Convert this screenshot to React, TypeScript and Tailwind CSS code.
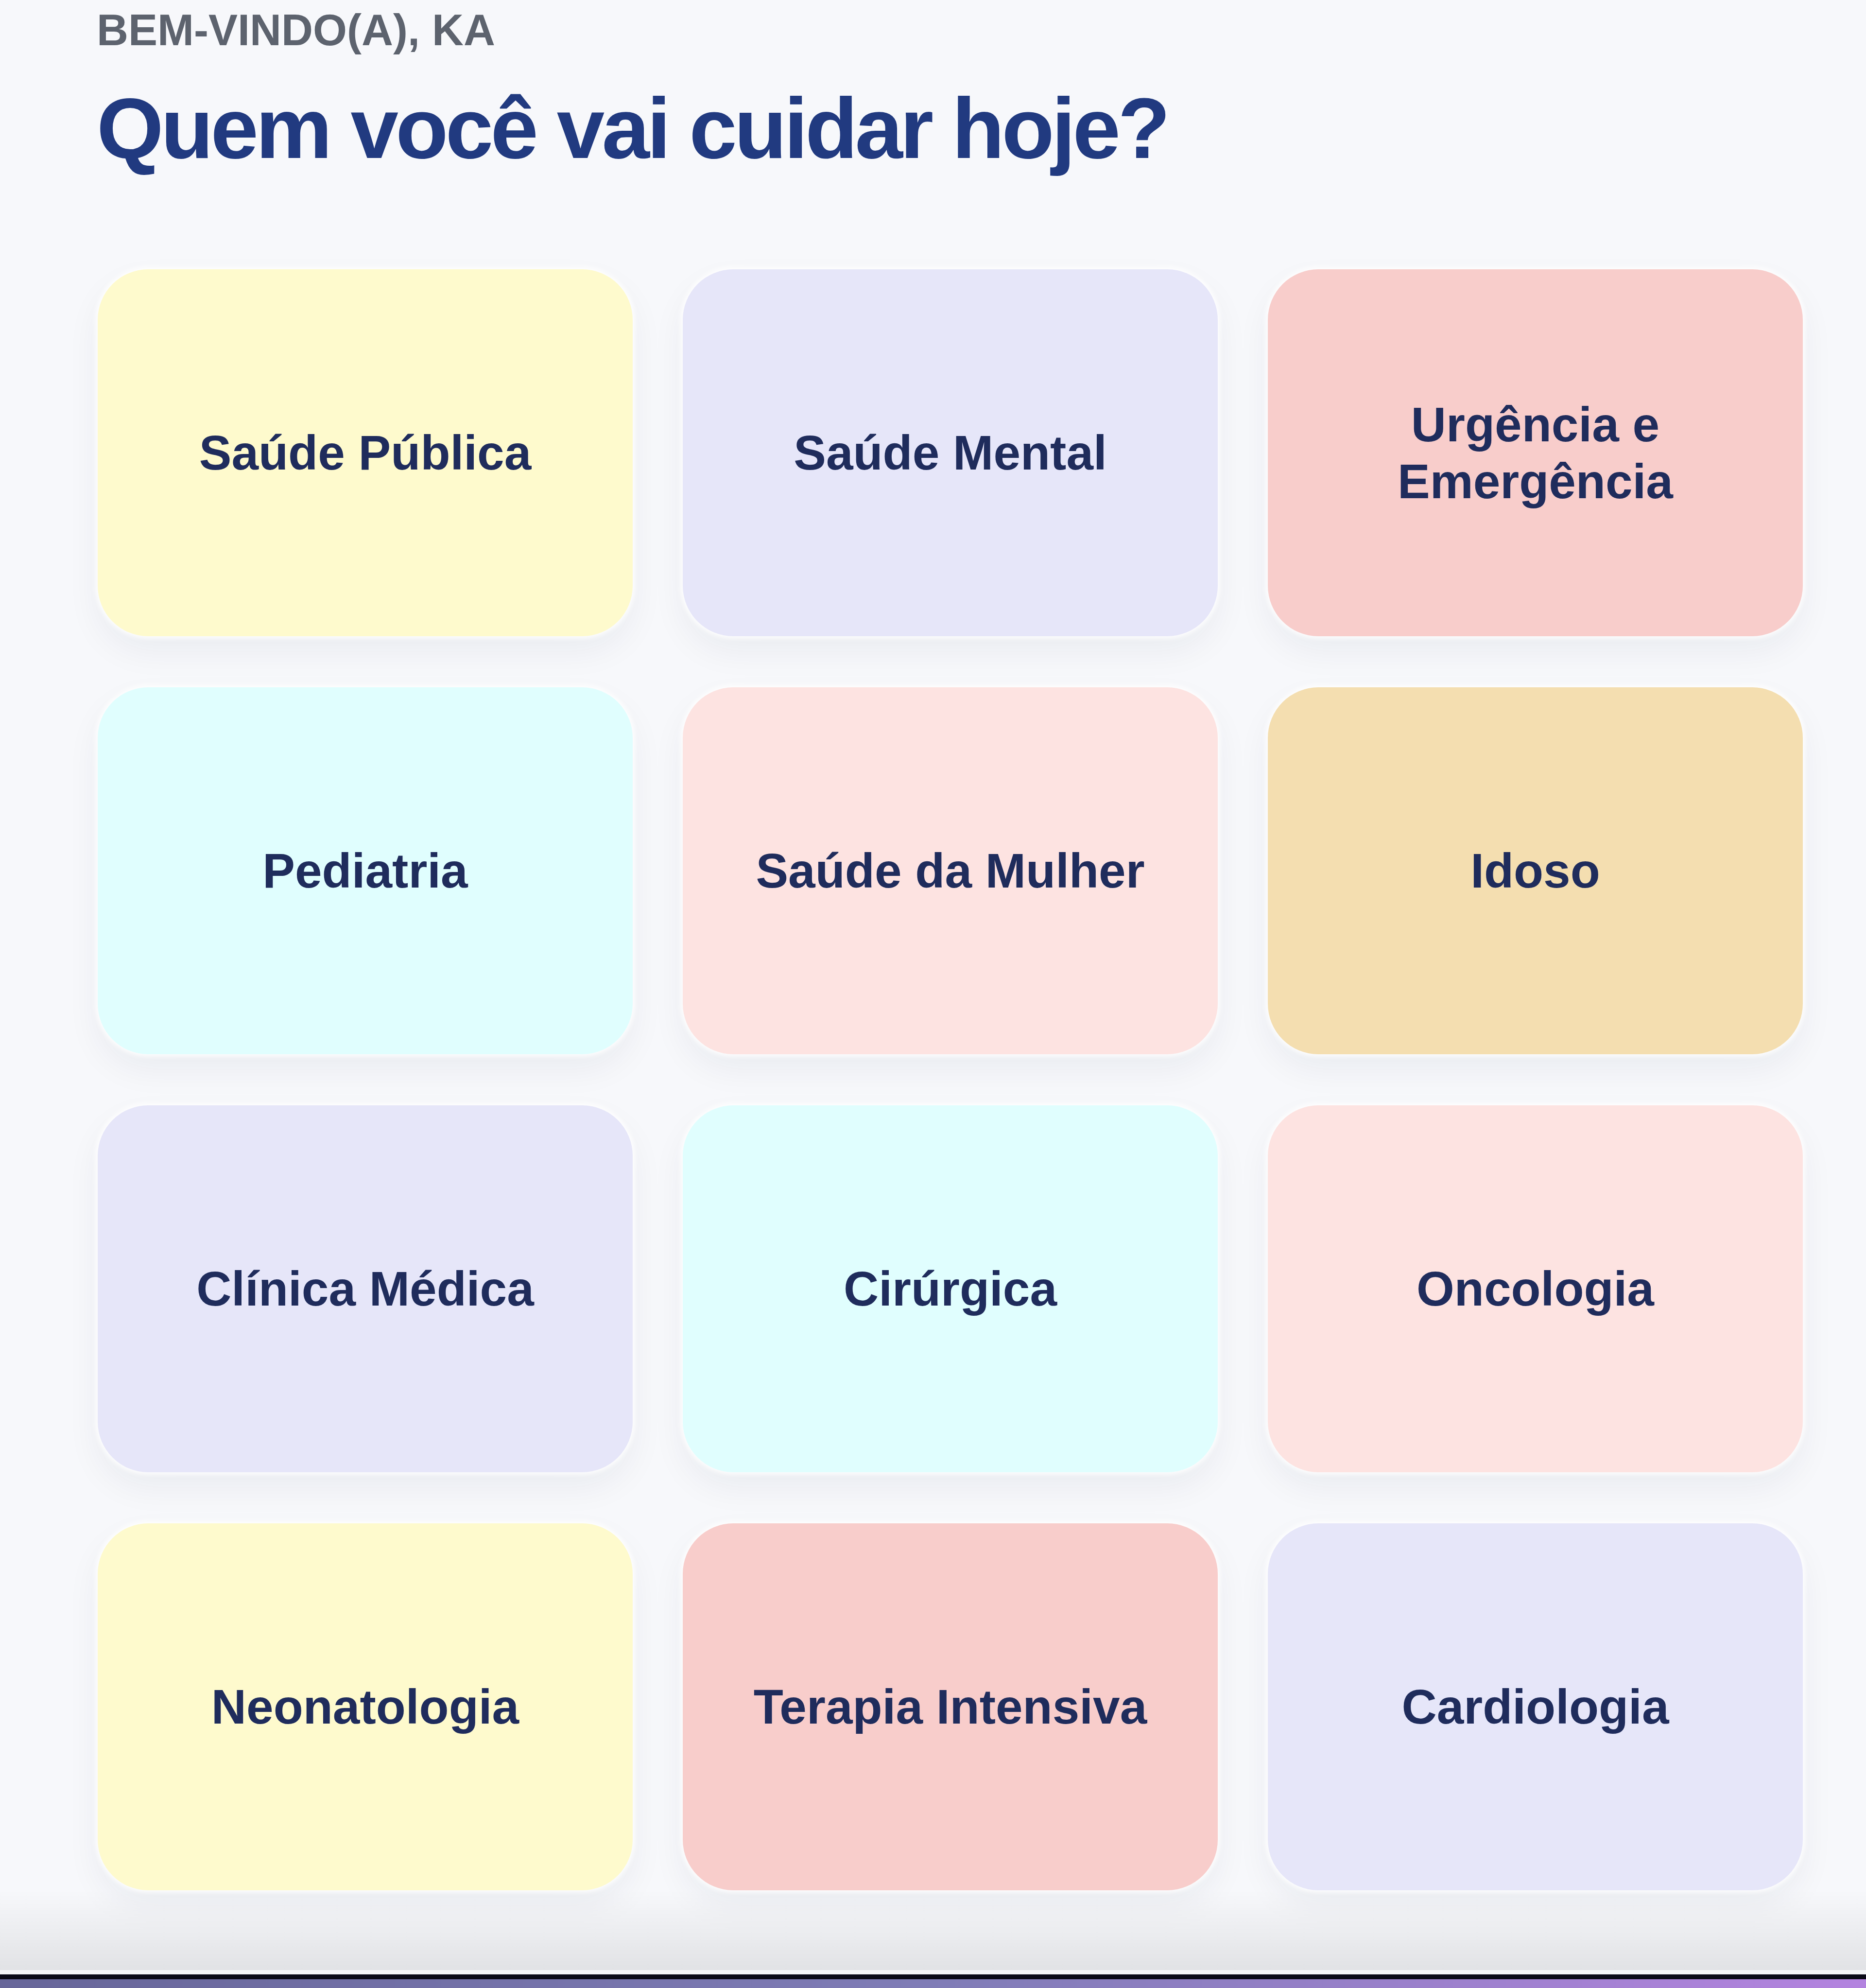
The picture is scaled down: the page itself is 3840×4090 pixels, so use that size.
import React from "react";

const cards: { label: string; bg: string }[] = [
  { label: "Saúde Pública", bg: "bg-[#fefacd]" },
  { label: "Saúde Mental", bg: "bg-[#e6e6f9]" },
  { label: "Urgência e Emergência", bg: "bg-[#f8cdcb]" },
  { label: "Pediatria", bg: "bg-[#e0fefe]" },
  { label: "Saúde da Mulher", bg: "bg-[#fde3e1]" },
  { label: "Idoso", bg: "bg-[#f4deb0]" },
  { label: "Clínica Médica", bg: "bg-[#e6e6f9]" },
  { label: "Cirúrgica", bg: "bg-[#e0fefe]" },
  { label: "Oncologia", bg: "bg-[#fde3e1]" },
  { label: "Neonatologia", bg: "bg-[#fefacd]" },
  { label: "Terapia Intensiva", bg: "bg-[#f8cdcb]" },
  { label: "Cardiologia", bg: "bg-[#e6e6f9]" },
];

export default function App() {
  return (
    <div
      className="w-[3840px] h-[4090px] bg-[#f7f8fb] flex flex-col overflow-hidden"
      style={{ fontFamily: '"Liberation Sans", Arial, sans-serif' }}
    >
      <div className="pl-[199px] pt-[17px]">
        <div className="text-[90px] leading-none font-bold text-[#5d636e] uppercase">
          BEM-VINDO(A), KA
        </div>
        <h1 className="mt-[69px] text-[177px] leading-none font-bold text-[#213a80] tracking-[-0.032em]">
          Quem você vai cuidar hoje?
        </h1>
      </div>

      <div className="mt-[201px] pl-[201px] pr-[130px] grid grid-cols-3 gap-x-[103px] gap-y-[105px]">
        {cards.map((c) => (
          <div
            key={c.label}
            className={`${c.bg} h-[755px] rounded-[104px] flex items-center justify-center px-[110px] text-center shadow-[0_0_10px_5px_rgba(255,255,255,0.85),0_30px_70px_rgba(20,30,60,0.06)]`}
          >
            <span className="text-[100px] leading-[1.17] font-bold text-[#1f2c5c]">
              {c.label}
            </span>
          </div>
        ))}
      </div>

      <div className="mt-auto h-[165px] bg-gradient-to-b from-[rgba(247,248,251,0)] to-[#e1e2e5]" />
      <div className="h-[9px] bg-[#f4f5f8]" />
      <div className="h-[10px] bg-[#0a0a18]" />
      <div className="h-[18px] bg-gradient-to-r from-[#676699] via-[#7f7cb6] to-[#b383df]" />
    </div>
  );
}
